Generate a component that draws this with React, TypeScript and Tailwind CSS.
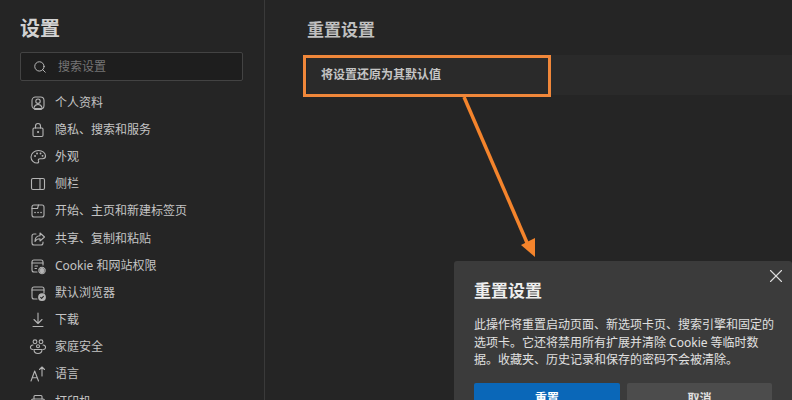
import React from 'react';
import { Search, X } from 'lucide-react';

const Icon: React.FC<{ children: React.ReactNode }> = ({ children }) => (
    <svg width="18" height="18" viewBox="0 0 18 18" fill="none" stroke="currentColor" strokeWidth="1.1" strokeLinecap="round" strokeLinejoin="round">
        {children}
    </svg>
);

const navItems: { label: string; icon: React.ReactNode }[] = [
    {
        label: '个人资料',
        icon: (
            <Icon>
                <rect x="3" y="3" width="12" height="12" rx="3.5" />
                <circle cx="9" cy="7.2" r="2.200" />
                <path d="M5 13.500c.6-2.200 2-3 4-3s3.400.8 4 3" />
                <path d="M6 15h6" strokeWidth="2" />
            </Icon>
        ),
    },
    {
        label: '隐私、搜索和服务',
        icon: (
            <Icon>
                <rect x="4" y="7" width="10" height="8.500" rx="1.200" />
                <path d="M6.500 7V5a2.500 2.500 0 0 1 5 0v2" />
                <path d="M9 11h.1" strokeWidth="2" />
            </Icon>
        ),
    },
    {
        label: '外观',
        icon: (
            <Icon>
                <path d="M9.500 2.500c-4 0-7.500 2.800-7.500 6.500 0 3.400 3 6 6 6 1.500 0 2-1 1.500-2-.6-1.300.2-2.300 1.500-2.300h2.500c1.700 0 3-1 3-2.700 0-3-3-5.500-7-5.500z" />
                <path d="M6 8h.1M8 5.500h.1M11.500 5.500h.1M13.500 7.800h.1" strokeWidth="1.800" />
            </Icon>
        ),
    },
    {
        label: '侧栏',
        icon: (
            <Icon>
                <rect x="2.500" y="3.500" width="13" height="11" rx="1.500" />
                <path d="M11 3.500v11" />
            </Icon>
        ),
    },
    {
        label: '开始、主页和新建标签页',
        icon: (
            <Icon>
                <rect x="3" y="3" width="12" height="12" rx="2" />
                <path d="M3 6.500h5.500L9.500 3M3 6.500" />
                <path d="M6 10.500h.1M9 10.500h.1M12 10.500h.1" strokeWidth="1.600" />
            </Icon>
        ),
    },
    {
        label: '共享、复制和粘贴',
        icon: (
            <Icon>
                <path d="M7 4H5a2 2 0 0 0-2 2v7a2 2 0 0 0 2 2h7a2 2 0 0 0 2-2v-1" />
                <path d="M11 3l4.500 4L11 11V8.700c-2.500 0-4 .8-5 2.800 0-3.500 1.800-5.600 5-5.700z" />
            </Icon>
        ),
    },
    {
        label: 'Cookie 和网站权限',
        icon: (
            <Icon>
                <path d="M8 15H5a2 2 0 0 1-2-2V5a2 2 0 0 1 2-2h7a2 2 0 0 1 2 2v3" />
                <path d="M3 6h11M6 9h2.500M6 11.500h1.500" />
                <circle cx="13" cy="13.500" r="2" fill="currentColor" />
                <circle cx="13" cy="13.500" r="3.200" strokeDasharray="1.500 1" />
            </Icon>
        ),
    },
    {
        label: '默认浏览器',
        icon: (
            <Icon>
                <path d="M8 15H5a2 2 0 0 1-2-2V5a2 2 0 0 1 2-2h8a2 2 0 0 1 2 2v4" />
                <path d="M3 6h12" />
                <circle cx="13" cy="13.200" r="3.300" fill="currentColor" />
                <path d="M11.600 13.300l1 1 1.800-2" stroke="#252525" />
            </Icon>
        ),
    },
    {
        label: '下载',
        icon: (
            <Icon>
                <path d="M9 2v10.500M5 8.500l4 4 4-4M4 15.500h10" />
            </Icon>
        ),
    },
    {
        label: '家庭安全',
        icon: (
            <Icon>
                <circle cx="6" cy="3.800" r="1.900" />
                <circle cx="12" cy="3.800" r="1.900" />
                <circle cx="9" cy="8.300" r="1.500" />
                <path d="M4 7c-1.700.2-2.800 1.300-2.500 2.800.2 1 1.200 1.700 2.500 1.700M14 7c1.700.2 2.800 1.300 2.500 2.800-.2 1-1.200 1.700-2.500 1.700" />
                <path d="M5 11.500h8c0 2.500-1.700 4-4 4s-4-1.500-4-4z" />
            </Icon>
        ),
    },
    {
        label: '语言',
        icon: (
            <Icon>
                <path d="M2 16l3.700-10L9.500 16M3.200 12.800h5" />
                <path d="M10.500 4.500L13 2l2.500 2.500M13 2v9" />
            </Icon>
        ),
    },
    {
        label: '打印机',
        icon: (
            <Icon>
                <path d="M5 6V3.500A1 1 0 0 1 6 2.500h6a1 1 0 0 1 1 1V6" />
                <rect x="2.500" y="6" width="13" height="8" rx="1.500" />
            </Icon>
        ),
    },
];

export default function App() {
    return (
        <div className="relative flex h-[400px] w-[792px] overflow-hidden bg-[#252525] [font-family:'Noto_Sans','Noto_Sans_CJK_SC',sans-serif] text-[#c4c4c4]">
            <aside className="w-[265px] shrink-0 border-r border-[#3a3a3a] pl-5 pr-[21px] pt-[14px]">
                <h1 className="h-[30px] text-[20px] leading-[30px] font-bold text-[#d2d2d2]">设置</h1>
                <div className="mt-2 flex h-[29px] items-center rounded-[2px] border border-[#434343] bg-[#1e1e1e] pl-3 text-[12px] text-[#757575]">
                    <Search size={14} strokeWidth={1.5} className="text-[#c8c8c8]" />
                    <span className="ml-[11px]">搜索设置</span>
                </div>
                <nav className="mt-2">
                    {navItems.map((item) => (
                        <div key={item.label} className="-ml-5 flex h-[27.2px] items-center pl-[29px] text-[12px]">
                            <span className="flex w-[18px] shrink-0 justify-center text-[#b4b4b4]">{item.icon}</span>
                            <span className="ml-2 whitespace-nowrap">{item.label}</span>
                        </div>
                    ))}
                </nav>
            </aside>

            <main className="flex-1 pl-[42px] pt-[16px]">
                <h2 className="h-[28px] text-[17px] leading-[28px] font-bold text-[#c0c0c0]">重置设置</h2>
                <div className="mt-[11px] flex h-[40px] items-center bg-[#2a2a2a] pl-[14px] text-[12px] font-bold text-[#c4c4c4]">
                    将设置还原为其默认值
                </div>
            </main>

            {/* annotation */}
            <div className="absolute left-[303px] top-[55px] h-[42px] w-[248px] border-[3px] border-[#f0873a]" />
            <svg className="absolute left-[455px] top-[90px]" width="90" height="175" viewBox="0 0 90 175" fill="none">
                <path d="M9 7 L73 155" stroke="#f4842c" strokeWidth="3.500" />
                <path d="M80 167 L66 155 L80 148 Z" fill="#f4842c" />
            </svg>

            {/* dialog */}
            <div className="absolute left-[454px] top-[261px] h-[160px] w-[338px] rounded-[3px] bg-[#3b3b3b] pl-5 pr-5 pt-[17px] text-[#e0e0e0]">
                <X size={22} strokeWidth={1.2} className="absolute right-[5px] top-[4px] text-[#dddddd]" />
                <h3 className="h-[26px] text-[17px] leading-[26px] font-bold text-[#eeeeee]">重置设置</h3>
                <p className="mt-[12px] w-[302px] text-[12px] leading-[17.5px]">
                    此操作将重置启动页面、新选项卡页、搜索引擎和固定的选项卡。它还将禁用所有扩展并清除 Cookie 等临时数据。收藏夹、历史记录和保存的密码不会被清除。
                </p>
                <div className="mt-[14px] flex gap-[7px]">
                    <button className="h-[32px] w-[146px] rounded-[2px] bg-[#0a67b8] text-[12px] font-bold text-white">重置</button>
                    <button className="h-[32px] w-[145px] rounded-[2px] bg-[#4c4c4c] text-[12px] font-bold text-[#e0e0e0]">取消</button>
                </div>
            </div>
        </div>
    );
}
